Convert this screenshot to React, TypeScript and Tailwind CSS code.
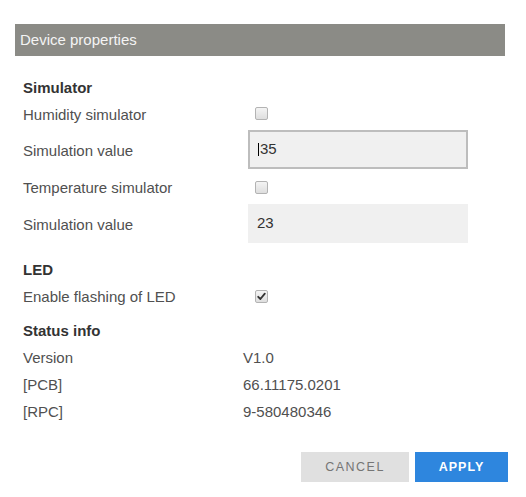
import React from "react";

function Box({ checked = false, className = "" }: { checked?: boolean; className?: string }) {
  return (
    <span
      className={
        "inline-flex items-center justify-center w-[13px] h-[13px] rounded-[2px] border border-[#b3b3b3] bg-gradient-to-b from-[#f4f4f4] to-[#dedede] " +
        className
      }
    >
      {checked && (
        <svg width="9" height="9" viewBox="0 0 9 9">
          <path d="M1.2 4.8 L3.4 7 L7.8 1.6" fill="none" stroke="#333" strokeWidth="1.8" strokeLinecap="round" strokeLinejoin="round" />
        </svg>
      )}
    </span>
  );
}

export default function App() {
  const font = { fontFamily: '"Liberation Sans", Arial, sans-serif' };
  return (
    <div className="w-[526px] h-[497px] bg-white pt-[24px] px-[15px]" style={font}>
      <div className="h-[32px] w-[490px] bg-[#8b8b86] text-[#f4f4f4] text-[15px] pl-[5px] flex items-center">
        Device properties
      </div>

      <div className="pl-[8px] text-[15px] text-[#505050]">
        <div className="mt-[22px] h-[20px] flex items-center font-bold text-[#333]">Simulator</div>

        <div className="mt-[7px] h-[20px] flex items-center">
          <div className="w-[220px]">Humidity simulator</div>
          <Box className="ml-[12px] -mt-[4px]" />
        </div>

        <div className="mt-[5px] h-[39px] flex items-center">
          <div className="w-[225px] mt-[4px]">Simulation value</div>
          <div className="w-[220px] h-[39px] bg-[#f0f0f0] border-2 border-[#bdbdbd] flex items-center pl-[8px] text-[#333]">
            <span className="w-[1px] h-[13px] bg-black mr-[1px]" />
            35
          </div>
        </div>

        <div className="mt-[9px] h-[20px] flex items-center">
          <div className="w-[220px]">Temperature simulator</div>
          <Box className="ml-[12px] -mt-[1px]" />
        </div>

        <div className="mt-[6px] h-[39px] flex items-center">
          <div className="w-[225px] mt-[3px]">Simulation value</div>
          <div className="w-[220px] h-[39px] bg-[#f0f0f0] flex items-center pl-[9px] text-[#333]">23</div>
        </div>

        <div className="mt-[17px] h-[20px] flex items-center font-bold text-[#333]">LED</div>

        <div className="mt-[7px] h-[20px] flex items-center">
          <div className="w-[220px]">Enable flashing of LED</div>
          <Box checked className="ml-[12px] -mt-[2px]" />
        </div>

        <div className="mt-[14px] h-[20px] flex items-center font-bold text-[#333]">Status info</div>

        <div className="mt-[7px] h-[20px] flex items-center">
          <div className="w-[220px]">Version</div>
          <div>V1.0</div>
        </div>
        <div className="mt-[7px] h-[20px] flex items-center">
          <div className="w-[220px]">[PCB]</div>
          <div>66.11175.0201</div>
        </div>
        <div className="mt-[7px] h-[20px] flex items-center">
          <div className="w-[220px]">[RPC]</div>
          <div>9-580480346</div>
        </div>
      </div>

      <div className="mt-[30px] flex justify-end gap-[6px] w-[493px]">
        <div className="w-[108px] h-[30px] bg-[#e0e0e0] text-[#757575] text-[12.5px] tracking-[1.5px] flex items-center justify-center">
          CANCEL
        </div>
        <div className="w-[93px] h-[30px] bg-[#2e86de] text-white font-bold text-[12.5px] tracking-[1px] flex items-center justify-center">
          APPLY
        </div>
      </div>
    </div>
  );
}
